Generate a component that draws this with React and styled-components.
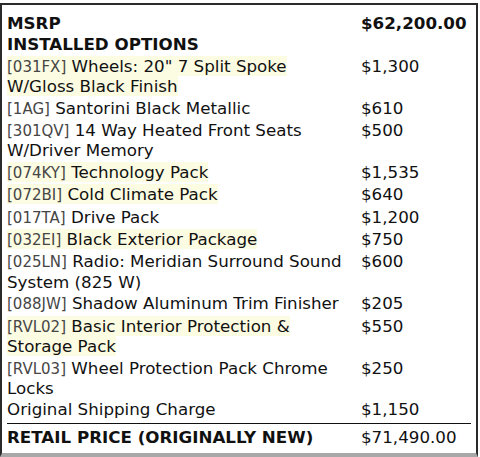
import React from 'react';
import styled, { createGlobalStyle } from 'styled-components';

const GlobalStyle = createGlobalStyle`
    body {
        margin: 0;
        padding-top: 3px;
        background: #ffffff;
        font-family: 'DejaVu Sans', 'Liberation Sans', sans-serif;
    }
`;

const Frame = styled.div`
    box-sizing: border-box;
    width: 478px;
    height: 454px;
    border: 2px solid #2a2a2a;
    border-bottom-color: #a8a8a8;
    border-bottom-width: 4px;
    padding: 8px 6px 0 5px;
    background: #ffffff;
`;

const Table = styled.table`
    width: 464px;
    border-collapse: collapse;
    font-size: 16.7px;
    line-height: 19.4px;
    color: #111111;
`;

const Row = styled.tr`
    border-top: ${p => (p.total ? '1px solid #111111' : 'none')};
`;

const Label = styled.td`
    width: 346px;
    padding: ${p => (p.$top ? '4px' : '1px')} 8px ${p => (p.$bottom ? '3px' : '1px')} 0;
    vertical-align: top;
    font-weight: ${p => (p.bold ? 'bold' : 'normal')};
`;

const Price = styled.td`
    padding: ${p => (p.$top ? '4px' : '1px')} 0 ${p => (p.$bottom ? '3px' : '1px')} 0;
    vertical-align: top;
    font-weight: ${p => (p.bold ? 'bold' : 'normal')};
`;

const Desc = styled.span`
    background: ${p => (p.mark ? '#fcfce2' : 'transparent')};
`;

const Code = styled.span`
    font-size: 15px;
    color: #464646;
`;

const options = [
    { code: '031FX', name: 'Wheels: 20" 7 Split Spoke W/Gloss Black Finish', price: '$1,300', mark: true },
    { code: '1AG', name: 'Santorini Black Metallic', price: '$610' },
    { code: '301QV', name: '14 Way Heated Front Seats W/Driver Memory', price: '$500' },
    { code: '074KY', name: 'Technology Pack', price: '$1,535', mark: true },
    { code: '072BI', name: 'Cold Climate Pack', price: '$640', mark: true },
    { code: '017TA', name: 'Drive Pack', price: '$1,200' },
    { code: '032EI', name: 'Black Exterior Package', price: '$750', mark: true },
    { code: '025LN', name: 'Radio: Meridian Surround Sound System (825 W)', price: '$600' },
    { code: '088JW', name: 'Shadow Aluminum Trim Finisher', price: '$205' },
    { code: 'RVL02', name: 'Basic Interior Protection & Storage Pack', price: '$550', mark: true },
    { code: 'RVL03', name: 'Wheel Protection Pack Chrome Locks', price: '$250' },
];

const App = () => (
    <>
        <GlobalStyle />
        <Frame>
            <Table>
                <tbody>
                    <Row>
                        <Label bold>MSRP</Label>
                        <Price bold>$62,200.00</Price>
                    </Row>
                    <Row>
                        <Label bold>INSTALLED OPTIONS</Label>
                        <Price />
                    </Row>
                    {options.map(o => (
                        <Row key={o.code}>
                            <Label>
                                <Desc mark={o.mark}>
                                    <Code>[{o.code}]</Code> {o.name}
                                </Desc>
                            </Label>
                            <Price>{o.price}</Price>
                        </Row>
                    ))}
                    <Row>
                        <Label $bottom>Original Shipping Charge</Label>
                        <Price $bottom>$1,150</Price>
                    </Row>
                    <Row total>
                        <Label bold $top>RETAIL PRICE (ORIGINALLY NEW)</Label>
                        <Price $top>$71,490.00</Price>
                    </Row>
                </tbody>
            </Table>
        </Frame>
    </>
);

export default App;
